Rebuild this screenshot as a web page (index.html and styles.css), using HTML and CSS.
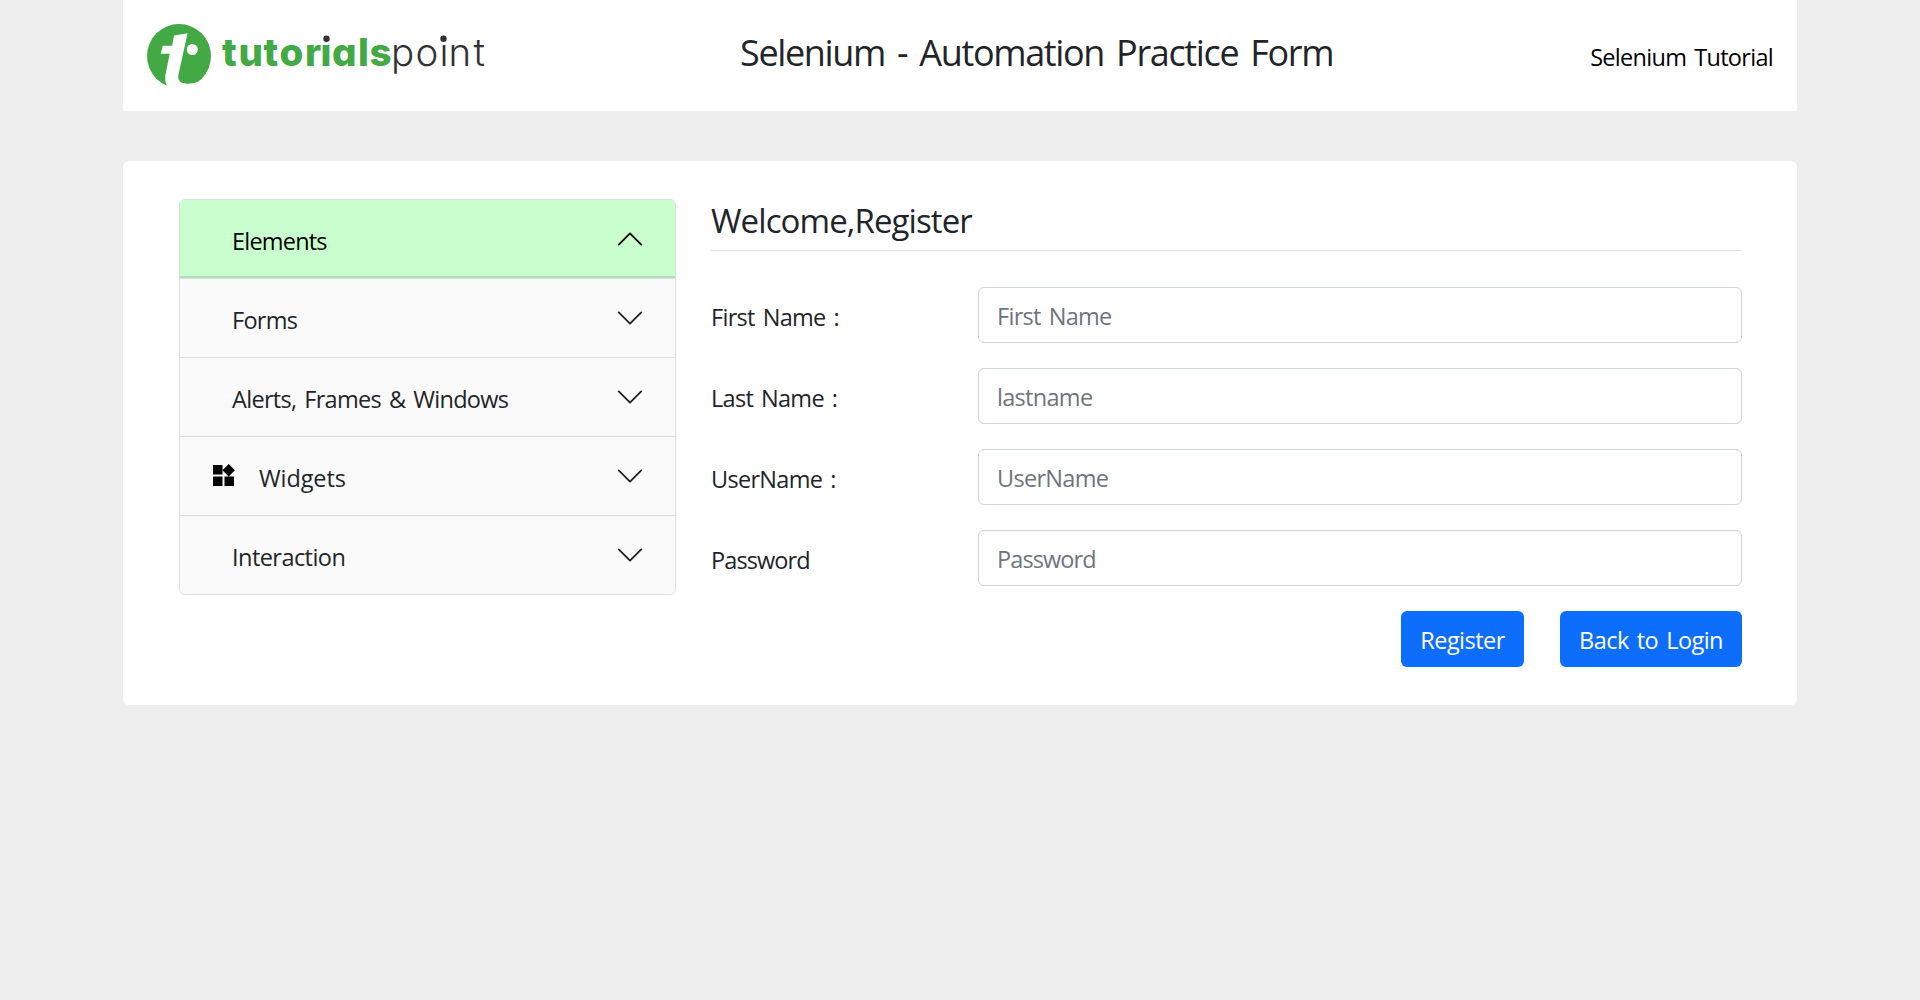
FILE: index.html
```html
<!DOCTYPE html>
<html lang="en">
<head>
<meta charset="utf-8">
<title>Selenium Practice - Register</title>
<link rel="stylesheet" href="styles.css">
</head>
<body>
<header class="header">
  <a class="logo" aria-label="tutorialspoint">
    <svg width="345" height="70" viewBox="0 0 345 70">
      <circle cx="32" cy="34" r="32" fill="#43a944"/>
      <path fill="#fff" d="M27 13.6 L40.500 11.200 L31.200 54 Q30.500 61.400 40 61.700 Q47 61.700 51.500 59.500 L55 68 H20 L20.500 64.200 Q17.600 61 18.400 53 L22.700 31.800 H13.700 L15.800 23.700 H25.200 Z"/>
      <circle cx="45.300" cy="27.500" r="5.500" fill="#fff"/>
      <text class="logo-bold" y="43.700" x="75 91.500 116.500 132.500 158 173.500 185 211 222.500">tutorials</text>
      <text class="logo-light" y="43.700" x="244 268.500 292.500 301.500 326.500">point</text>
      <path fill="#fff" d="M174 9h11v11.500h-11zM291 9h11v11.500h-11z"/>
      <circle cx="179.500" cy="16.800" r="3.200" fill="#323232"/>
      <circle cx="296.500" cy="16.800" r="3.200" fill="#323232"/>
    </svg>
  </a>
  <h1 class="title">Selenium - Automation Practice Form</h1>
  <a class="tutorial">Selenium Tutorial</a>
</header>
<main class="card">
  <nav class="menu">
    <button class="item item-open"><span>Elements</span><svg class="chev up" viewBox="0 0 16 16"><path d="M2 5l6 6 6-6"/></svg></button>
    <button class="item"><span>Forms</span><svg class="chev" viewBox="0 0 16 16"><path d="M2 5l6 6 6-6"/></svg></button>
    <button class="item"><span>Alerts, Frames &amp; Windows</span><svg class="chev" viewBox="0 0 16 16"><path d="M2 5l6 6 6-6"/></svg></button>
    <button class="item item-icon"><svg class="widgets" viewBox="0 0 22 22"><path d="M0 1h9.500v9.500H0zM0 12.500h9.500V22H0zM11.500 12.500H21V22h-9.500zM15.700 0l6.200 6.200-6.200 6.200-6.200-6.200z"/></svg><span>Widgets</span><svg class="chev" viewBox="0 0 16 16"><path d="M2 5l6 6 6-6"/></svg></button>
    <button class="item"><span>Interaction</span><svg class="chev" viewBox="0 0 16 16"><path d="M2 5l6 6 6-6"/></svg></button>
  </nav>
  <form class="form">
    <h2 class="heading">Welcome,Register</h2>
    <div class="row"><label for="first">First Name :</label><input id="first" type="text" placeholder="First Name"></div>
    <div class="row"><label for="last">Last Name :</label><input id="last" type="text" placeholder="lastname"></div>
    <div class="row"><label for="user">UserName :</label><input id="user" type="text" placeholder="UserName"></div>
    <div class="row row-password"><label for="pass">Password</label><input id="pass" type="password" placeholder="Password"></div>
    <div class="actions"><button type="button" class="btn btn-register">Register</button><button type="button" class="btn btn-back">Back to Login</button></div>
  </form>
</main>
</body>
</html>
```
FILE: styles.css
```css
* { box-sizing: border-box; }
body {
  margin: 0;
  padding: 0 123px;
  background: #eee;
  color: #212529;
  font: 23.5px/36px "Open Sans", "Noto Sans", sans-serif;
  letter-spacing: -0.7px;
  word-spacing: 2.5px;
}
button, input { font: inherit; letter-spacing: inherit; word-spacing: inherit; color: inherit; }
h1, h2 { margin: 0; font-weight: 400; }
.header {
  display: flex;
  height: 111px;
  padding: 22px 24px 0;
  background: #fff;
}
.logo { width: 345px; height: 70px; }
.logo svg { display: block; }
.logo text { font-family: Inter, sans-serif; font-size: 38.5px; font-feature-settings: "cv11" 1; letter-spacing: 0; }
.logo-bold { font-weight: 800; fill: #43a944; }
.logo-light { font-weight: 300; fill: #323232; }
.title {
  flex: 1;
  padding: 9px 0 0 248px;
  font-size: 36px;
  line-height: 44px;
  letter-spacing: -1.35px;
  word-spacing: 4px;
  white-space: nowrap;
}
.tutorial { padding-top: 17px; color: #000; white-space: nowrap; }
.card {
  display: flex;
  gap: 35px;
  height: 544px;
  margin-top: 50px;
  padding: 38px 55px 0 56px;
  background: #fff;
  border-radius: 6px;
}
.menu {
  flex: none;
  width: 497px;
  height: 396px;
  border: 1px solid #dedede;
  border-radius: 6px;
  overflow: hidden;
}
.item {
  display: flex;
  align-items: center;
  width: 100%;
  height: 79px;
  padding: 3px 30px 0 52px;
  background: #fafafa;
  border: 0;
  border-bottom: 1px solid #dedede;
  text-align: left;
}
.item:last-child { height: 78px; border-bottom: 0; letter-spacing: -0.55px; }
.item-open { background: #c9ffce; color: #000; box-shadow: inset 0 -2px 0 #b0dfb5; letter-spacing: -0.8px; }
.item-icon { padding-left: 33px; letter-spacing: -0.1px; }
.widgets { width: 22px; height: 22px; margin: -6px 24px 0 0; fill: #000; }
.chev {
  width: 30px;
  height: 30px;
  margin: -3px 0 0 auto;
  fill: none;
  stroke: #212529;
  stroke-width: 1;
  stroke-linecap: round;
  stroke-linejoin: round;
}
.up { transform: rotate(180deg); stroke: #000; }
.form { flex: 1; }
.heading {
  height: 52px;
  margin-bottom: 36px;
  border-bottom: 1px solid #dee2e6;
  font-size: 33px;
  line-height: 44px;
  letter-spacing: -0.9px;
}
.row { display: flex; height: 56px; margin-bottom: 25px; }
.row-password { letter-spacing: -0.9px; }
.row label { width: 267px; padding-top: 12px; }
.row input {
  flex: 1;
  padding: 1px 18px 0;
  border: 1px solid #ced4da;
  border-radius: 6px;
  background: #fff;
}
.row input::placeholder { color: #6c757d; opacity: 1; }
.actions { display: flex; justify-content: flex-end; gap: 36px; }
.btn {
  height: 56px;
  padding: 2px 0 0;
  border: 0;
  border-radius: 6px;
  background: #0d6efd;
  color: #fff;
  letter-spacing: -0.55px;
}
.btn-register { width: 123px; }
.btn-back { width: 182px; }
```
